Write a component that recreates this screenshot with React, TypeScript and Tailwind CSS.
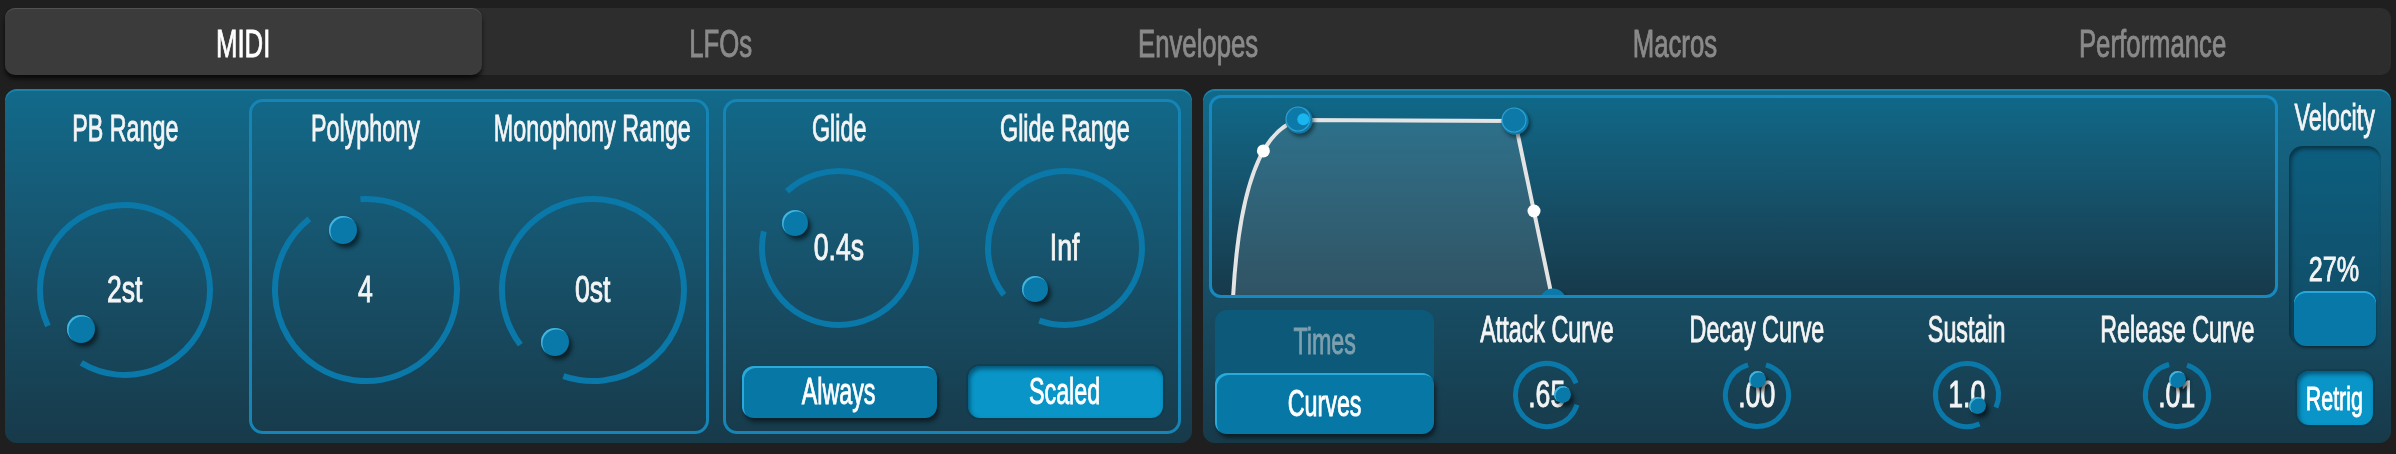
import React from "react";

const FONT =
  "font-['Liberation_Sans',Arial,sans-serif] font-normal [-webkit-text-stroke:0.9px_currentColor]";

const SX_LABEL = "[transform:scaleX(0.63)]";
const SX_VALUE = "[transform:scaleX(0.72)]";
const SX_TAB = "[transform:scaleX(0.66)]";

function T({ children, sx = SX_LABEL }: { children: React.ReactNode; sx?: string }) {
  return <span className={`inline-block whitespace-nowrap ${sx}`}>{children}</span>;
}

type KnobProps = {
  box: string;
  size: number;
  r: number;
  sw: number;
  angle: number;
  gap: number;
  dist: number;
  dot: number;
  value: string;
};

function Knob({ box, size, r, sw, angle, gap, dist, dot, value }: KnobProps) {
  const c = size / 2;
  const rad = (d: number) => (d * Math.PI) / 180;
  const a1 = rad(angle + gap / 2);
  const a2 = rad(angle - gap / 2 + 360);
  const p = (a: number) => `${(c + r * Math.cos(a)).toFixed(2)} ${(c + r * Math.sin(a)).toFixed(2)}`;
  const d = `M ${p(a1)} A ${r} ${r} 0 1 1 ${p(a2)}`;
  const dx = c + dist * Math.cos(rad(angle)) - dot / 2;
  const dy = c + dist * Math.sin(rad(angle)) - dot / 2;
  return (
    <div className={`relative shrink-0 ${box}`}>
      <svg width={size} height={size} viewBox={`0 0 ${size} ${size}`} className="absolute inset-0">
        <path d={d} fill="none" stroke="#0a78a8" strokeWidth={sw} />
      </svg>
      <div className="absolute inset-0 flex items-center justify-center text-[37px] leading-[40px] text-[#f4f4f4]">
        <T sx={SX_VALUE}>{value}</T>
      </div>
      <div
        className="absolute rounded-full bg-[#0879a9] shadow-[inset_1.5px_1.5px_0_rgba(90,200,240,0.75),3px_4px_4px_rgba(0,0,0,0.55)]"
        style={{ left: dx, top: dy, width: dot, height: dot }}
      />
    </div>
  );
}

function BigKnob(props: Omit<KnobProps, "box" | "size" | "sw" | "dot">) {
  return <Knob {...props} box="w-[200px] h-[200px]" size={200} sw={6} dot={28} />;
}

function MidKnob(props: Omit<KnobProps, "box" | "size" | "sw" | "dot" | "r" | "dist">) {
  return <Knob {...props} box="w-[180px] h-[180px]" size={180} r={77} dist={51} sw={6} dot={26} />;
}

function SmallKnob(props: Omit<KnobProps, "box" | "size" | "sw" | "dot" | "r" | "dist">) {
  return <Knob {...props} box="w-[80px] h-[80px]" size={80} r={31.5} dist={15.5} sw={5} dot={17} />;
}

function Label({ children }: { children: React.ReactNode }) {
  return (
    <div className="min-w-0 text-[37px] leading-[40px] text-[#f4f4f4] flex justify-center">
      <T>{children}</T>
    </div>
  );
}

function Tabs() {
  const tabs = ["MIDI", "LFOs", "Envelopes", "Macros", "Performance"];
  return (
    <div className="h-[67px] rounded-[10px] bg-[#2d2d2d] flex">
      {tabs.map((t, i) => (
        <div
          key={t}
          className={`flex-1 min-w-0 flex items-center justify-center pt-[5px] text-[39px] leading-[42px] rounded-[10px] ${
            i === 0
              ? "bg-[#3b3b3b] text-white shadow-[0_4px_4px_rgba(0,0,0,0.65),inset_0_1px_0_rgba(255,255,255,0.12)]"
              : "text-[#8a8a8a]"
          }`}
        >
          <T sx={SX_TAB}>{t}</T>
        </div>
      ))}
    </div>
  );
}

const raised =
  "bg-[#0778a6] shadow-[inset_2px_2px_0_rgba(45,175,225,0.9),2px_4px_4px_rgba(0,0,0,0.5)]";
const pressed =
  "bg-[#0995c8] shadow-[inset_2px_3px_4px_rgba(0,35,55,0.55),0_0_0_2px_rgba(10,55,75,0.45)]";

function LeftPanel() {
  return (
    <div className="w-[1187px] h-[354px] shrink-0 rounded-[12px] bg-linear-to-b from-[#116a8b] to-[#173a4a] shadow-[inset_0_2px_0_rgba(40,160,210,0.45)] flex gap-[14px] pl-[10px] pr-[11px] pt-[10px] pb-[9px]">
      <div className="w-[220px] shrink-0 min-w-0 border-[3px] border-transparent flex flex-col">
        <div className="pt-[7px]">
          <Label>PB Range</Label>
        </div>
        <div className="flex-1 flex items-center justify-center">
          <BigKnob r={85} angle={138} gap={34} dist={59} value="2st" />
        </div>
      </div>
      <div className="w-[460px] shrink-0 rounded-[14px] border-[3px] border-[#1684b4] flex">
        <div className="flex-1 min-w-0 flex flex-col">
          <div className="pt-[7px]">
            <Label>Polyphony</Label>
          </div>
          <div className="flex-1 flex items-center justify-center">
            <BigKnob r={91} angle={249} gap={35} dist={64} value="4" />
          </div>
        </div>
        <div className="flex-1 min-w-0 flex flex-col">
          <div className="pt-[7px]">
            <Label>Monophony Range</Label>
          </div>
          <div className="flex-1 flex items-center justify-center">
            <BigKnob r={91} angle={126} gap={34} dist={64} value="0st" />
          </div>
        </div>
      </div>
      <div className="w-[458px] shrink-0 rounded-[14px] border-[3px] border-[#1684b4] flex">
        <div className="flex-1 min-w-0 flex flex-col items-center">
          <div className="pt-[7px]">
            <Label>Glide</Label>
          </div>
          <div className="mt-[9px]">
            <MidKnob angle={210} gap={35} value="0.4s" />
          </div>
          <div
            className={`mt-[28px] w-[195px] h-[52px] rounded-[12px] flex items-center justify-center text-[37px] leading-[40px] text-white ${raised}`}
          >
            <T>Always</T>
          </div>
        </div>
        <div className="flex-1 min-w-0 flex flex-col items-center">
          <div className="pt-[7px]">
            <Label>Glide Range</Label>
          </div>
          <div className="mt-[9px]">
            <MidKnob angle={126} gap={33} value="Inf" />
          </div>
          <div
            className={`mt-[28px] w-[195px] h-[52px] rounded-[12px] flex items-center justify-center text-[37px] leading-[40px] text-white ${pressed}`}
          >
            <T>Scaled</T>
          </div>
        </div>
      </div>
    </div>
  );
}

function Envelope() {
  const S = { x: 21, y: 200 };
  const C = { x: 30, y: 36 };
  const P = { x: 87, y: 22 };
  const H = { x: 303, y: 23 };
  const D = { x: 341, y: 204 };
  const line = `M ${S.x} ${S.y} Q ${C.x} ${C.y} ${P.x} ${P.y} L ${H.x} ${H.y} L ${D.x} ${D.y}`;
  const fill = `${line} L ${D.x} 210 L ${S.x} 210 Z`;
  return (
    <div className="relative w-[1069px] h-[203px] rounded-[12px] border-[3px] border-[#168ac0] bg-linear-to-b from-[#0f6888] to-[#163a4b] overflow-hidden">
      <svg width="1063" height="197" viewBox="0 0 1063 197" className="absolute inset-0">
        <defs>
          <filter id="envds" x="-50%" y="-50%" width="200%" height="200%">
            <feDropShadow dx="2" dy="3" stdDeviation="2" floodColor="#000" floodOpacity="0.5" />
          </filter>
        </defs>
        <path d={fill} fill="rgba(120,150,165,0.28)" />
        <path d={line} fill="none" stroke="#e4e4e4" strokeWidth="4" />
        <circle cx="51.4" cy="52.9" r="6.5" fill="#ffffff" />
        <circle cx="322" cy="113" r="6.5" fill="#ffffff" />
        <g filter="url(#envds)">
          <circle cx={P.x} cy={P.y} r="13.5" fill="#0879a9" />
          <circle cx={H.x} cy={H.y} r="13.5" fill="#0879a9" />
          <circle cx={D.x} cy={D.y} r="13.5" fill="#0879a9" />
        </g>
        <circle cx={P.x - 1} cy={P.y - 1} r="12" fill="none" stroke="rgba(80,195,240,0.55)" strokeWidth="1.2" />
        <circle cx={H.x - 1} cy={H.y - 1} r="12" fill="none" stroke="rgba(80,195,240,0.55)" strokeWidth="1.2" />
        <circle cx={P.x + 4.3} cy={P.y - 0.7} r="6" fill="#19b5ee" />
      </svg>
    </div>
  );
}

function RightPanel() {
  const knobs = [
    { label: "Attack Curve", value: ".65", angle: -2, gap: 40 },
    { label: "Decay Curve", value: ".00", angle: -90, gap: 33 },
    { label: "Sustain", value: "1.0", angle: 45, gap: 43 },
    { label: "Release Curve", value: ".01", angle: -88, gap: 33 },
  ];
  return (
    <div className="flex-1 min-w-0 h-[354px] rounded-[12px] bg-linear-to-b from-[#116a8b] to-[#173a4a] shadow-[inset_0_2px_0_rgba(40,160,210,0.45)] flex">
      <div className="w-[1075px] shrink-0 flex flex-col pl-[6px] pt-[6px]">
        <Envelope />
        <div className="flex mt-[12px] pl-[6px]">
          <div className="w-[219px] h-[124px] shrink-0 rounded-[12px] bg-[#0c5979] flex flex-col">
            <div className="flex-1 flex items-center justify-center text-[37px] leading-[40px] text-[#7d9fae]">
              <T>Times</T>
            </div>
            <div
              className={`h-[61px] rounded-[12px] flex items-center justify-center text-[37px] leading-[40px] text-white ${raised}`}
            >
              <T>Curves</T>
            </div>
          </div>
          <div className="flex ml-[8px]">
            {knobs.map((k) => (
              <div key={k.label} className="w-[210px] shrink-0 min-w-0 flex flex-col items-center">
                <Label>{k.label}</Label>
                <div className="mt-[5px]">
                  <SmallKnob angle={k.angle} gap={k.gap} value={k.value} />
                </div>
              </div>
            ))}
          </div>
        </div>
      </div>
      <div className="flex-1 min-w-0 flex flex-col items-center pt-[9px]">
        <Label>Velocity</Label>
        <div className="mt-[8px] w-[92px] h-[200px] shrink-0 rounded-[14px] bg-linear-to-b from-[#0c5e7f] to-[#114b64] shadow-[inset_2px_3px_4px_rgba(0,0,0,0.45)] px-[5px] flex flex-col justify-end">
          <div className="flex justify-center text-[35px] leading-[38px] text-[#f4f4f4] mb-[3px]">
            <T sx={SX_VALUE}>27%</T>
          </div>
          <div className="h-[55px] rounded-[12px] bg-[#0878a8] shadow-[inset_0_2px_0_rgba(40,170,225,0.95),0_2px_3px_rgba(0,0,0,0.4)]" />
        </div>
        <div
          className={`mt-[25px] w-[76px] h-[54px] shrink-0 rounded-[12px] flex items-center justify-center text-[34px] leading-[36px] text-white ${pressed}`}
        >
          <T>Retrig</T>
        </div>
      </div>
    </div>
  );
}

export default function App() {
  return (
    <div className={`w-[2396px] h-[454px] bg-[#1f1f1f] px-[5px] pt-[8px] overflow-hidden ${FONT}`}>
      <Tabs />
      <div className="mt-[14px] flex gap-[11px]">
        <LeftPanel />
        <RightPanel />
      </div>
    </div>
  );
}
